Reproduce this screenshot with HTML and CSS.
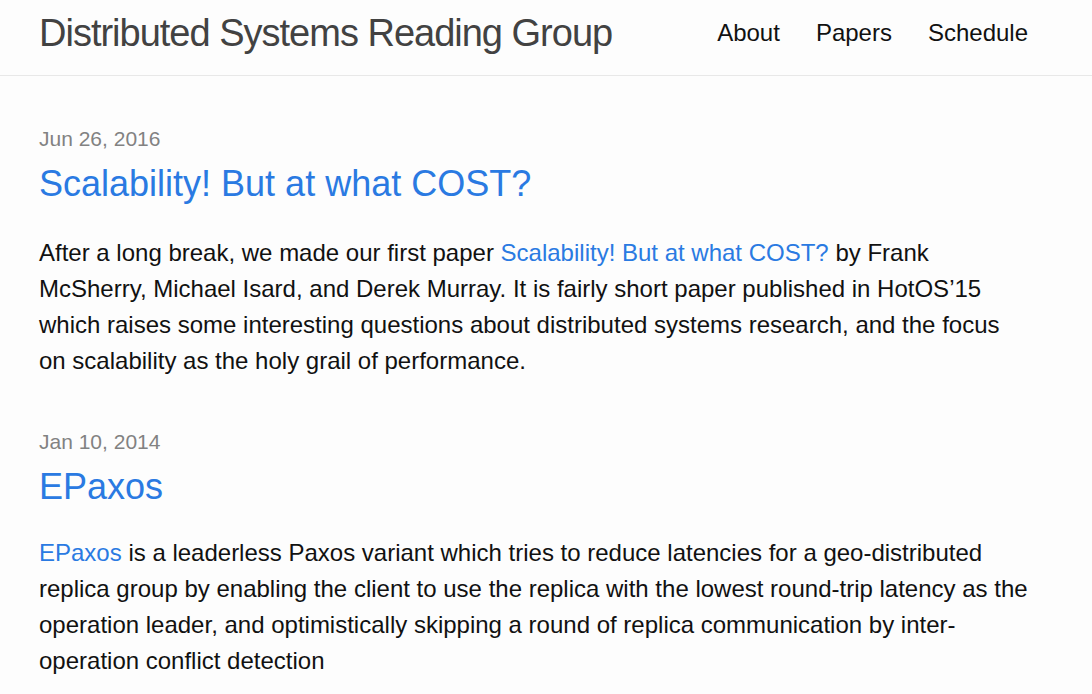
FILE: index.html
```html
<!DOCTYPE html>
<html lang="en">
<head>
<meta charset="utf-8">
<title>Distributed Systems Reading Group</title>
<link rel="stylesheet" href="styles.css">
</head>
<body>
<header class="site-header">
  <div class="wrapper header-inner">
    <a class="site-title" href="#">Distributed Systems Reading Group</a>
    <nav class="site-nav">
      <a class="page-link" href="#">About</a>
      <a class="page-link" href="#">Papers</a>
      <a class="page-link" href="#">Schedule</a>
    </nav>
  </div>
</header>
<main class="page-content">
  <div class="wrapper">
    <ul class="post-list">
      <li class="post">
        <span class="post-meta">Jun 26, 2016</span>
        <h2 class="post-title"><a class="post-link" href="#">Scalability! But at what COST?</a></h2>
        <p class="excerpt">After a long break, we made our first paper <a href="#">Scalability! But at what COST?</a> by Frank McSherry, Michael Isard, and Derek Murray. It is fairly short paper published in HotOS’15 which raises some interesting questions about distributed systems research, and the focus on scalability as the holy grail of performance.</p>
      </li>
      <li class="post post-compact">
        <span class="post-meta">Jan 10, 2014</span>
        <h2 class="post-title"><a class="post-link" href="#">EPaxos</a></h2>
        <p class="excerpt"><a href="#">EPaxos</a> is a leaderless Paxos variant which tries to reduce latencies for a geo-distributed replica group by enabling the client to use the replica with the lowest round-trip latency as the operation leader, and optimistically skipping a round of replica communication by inter-operation conflict detection</p>
      </li>
    </ul>
  </div>
</main>
</body>
</html>
```
FILE: styles.css
```css
* { box-sizing: border-box; }
html, body { margin: 0; padding: 0; }
body {
  background: #fdfdfd;
  color: #111111;
  font-family: "Liberation Sans", Arial, Helvetica, sans-serif;
  font-size: 24px;
  line-height: 1.5;
}
a { color: #2a7ae2; text-decoration: none; }
.wrapper {
  max-width: 1068px;
  padding: 0 39px;
}
.site-header {
  border-bottom: 1px solid #e8e8e8;
  height: 76px;
}
.header-inner {
  display: flex;
  align-items: center;
  justify-content: space-between;
  height: 65px;
}
.site-title {
  color: #424242;
  font-size: 38px;
  letter-spacing: -1px;
  line-height: 56px;
}
.site-nav {
  display: flex;
  gap: 36px;
  padding-right: 1px;
}
.page-link {
  color: #111111;
  line-height: 36px;
}
.page-content {
  padding-top: 45px;
}
.post-list {
  list-style: none;
  margin: 0;
  padding: 0;
}
.post {
  padding-bottom: 45px;
}
.post-meta {
  display: block;
  font-size: 21px;
  line-height: 36px;
  color: #828282;
}
.post-title {
  margin: 0 0 24px;
  font-size: 36px;
  font-weight: normal;
  line-height: 54px;
}
.post-compact .post-title {
  margin-bottom: 21px;
}
.excerpt {
  margin: 0;
}
```
